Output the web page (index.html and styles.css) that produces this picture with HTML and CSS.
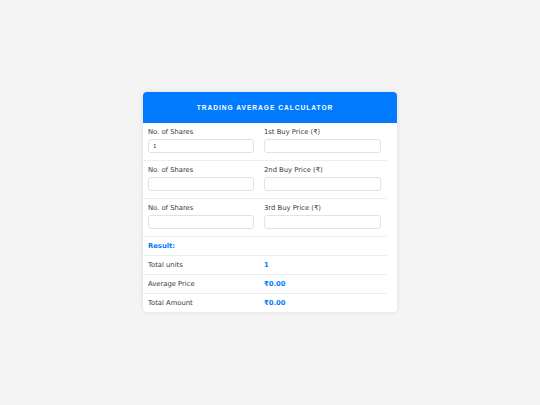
FILE: index.html
```html
<!DOCTYPE html>
<html>
<head>
<meta charset="utf-8">
<link rel="stylesheet" href="styles.css">
</head>
<body>
<div class="card">
  <div class="header">TRADING AVERAGE CALCULATOR</div>
  <table class="calc">
    <tr>
      <td class="c1"><label class="lbl">No. of Shares</label><input class="inp" type="text" value="1"></td>
      <td class="c2"><label class="lbl">1st Buy Price (₹)</label><input class="inp" type="text"></td>
    </tr>
    <tr>
      <td class="c1"><label class="lbl">No. of Shares</label><input class="inp" type="text"></td>
      <td class="c2"><label class="lbl">2nd Buy Price (₹)</label><input class="inp" type="text"></td>
    </tr>
    <tr>
      <td class="c1"><label class="lbl">No. of Shares</label><input class="inp" type="text"></td>
      <td class="c2"><label class="lbl">3rd Buy Price (₹)</label><input class="inp" type="text"></td>
    </tr>
    <tr class="res">
      <td class="c1 result-title">Result:</td>
      <td class="c2"></td>
    </tr>
    <tr class="res">
      <td class="c1">Total units</td>
      <td class="c2 val">1</td>
    </tr>
    <tr class="res">
      <td class="c1">Average Price</td>
      <td class="c2 val">₹0.00</td>
    </tr>
    <tr class="res">
      <td class="c1">Total Amount</td>
      <td class="c2 val">₹0.00</td>
    </tr>
  </table>
</div>
</body>
</html>
```
FILE: styles.css
```css
html, body {
  margin: 0;
  padding: 0;
}
body {
  background: #f4f4f4;
  font-family: "DejaVu Sans", Verdana, sans-serif;
  font-size: 6.8px;
  color: #3a3a3a;
  min-height: 100vh;
  display: flex;
  align-items: center;
  justify-content: center;
}
.card {
  width: 254px;
  background: #fff;
  border-radius: 4px;
  box-shadow: 0 0 5px rgba(0, 0, 0, 0.1);
  overflow: hidden;
  margin-top: -1px;
}
.header {
  background: #007bff;
  color: #fff;
  height: 31px;
  display: flex;
  align-items: center;
  justify-content: center;
  padding-right: 10px;
  font-family: "Liberation Sans", Arial, sans-serif;
  font-weight: bold;
  font-size: 6.6px;
  letter-spacing: 1px;
}
.calc {
  width: 244px;
  border-collapse: collapse;
  table-layout: fixed;
}
.calc td {
  padding: 5px;
  border-bottom: 1px solid #eee;
  vertical-align: top;
  line-height: 8px;
}
.calc tr:last-child td {
  border-bottom: none;
}
.c1 { width: 106px; }
.c2 { width: 118px; }
.lbl {
  display: block;
  line-height: 8px;
}
.inp {
  display: block;
  box-sizing: border-box;
  width: 100%;
  height: 14px;
  margin: 3px 0 2px;
  padding: 0 4px;
  border: 1px solid #e2e2e2;
  border-radius: 3px;
  font-family: "DejaVu Sans", Verdana, sans-serif;
  font-size: 5.5px;
  color: #333;
  background: #fff;
  outline: none;
}
.c2 .inp {
  width: 117px;
}
.result-title {
  color: #007bff;
  font-weight: bold;
}
.val {
  color: #007bff;
  font-weight: bold;
}
```
